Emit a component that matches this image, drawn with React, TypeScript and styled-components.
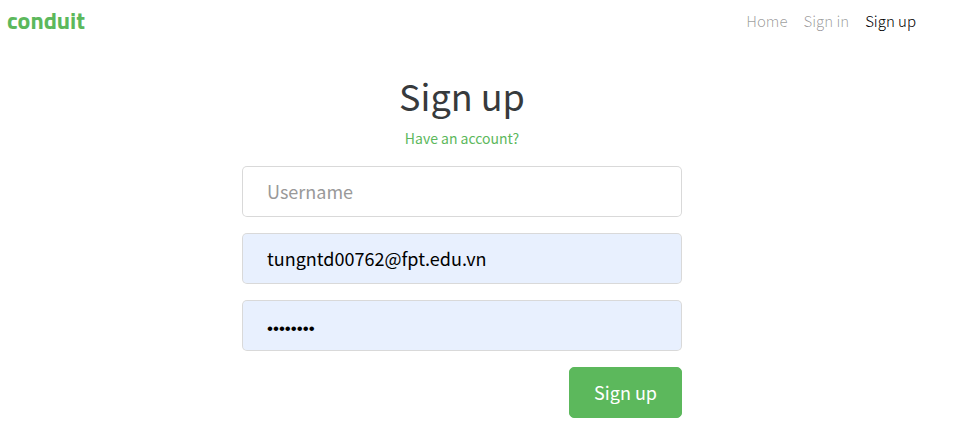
import React from 'react';
import styled, { createGlobalStyle } from 'styled-components';

const GlobalStyle = createGlobalStyle`
  *, *::before, *::after { box-sizing: border-box; }
  body {
    margin: 0;
    background: #fff;
    color: #373a3c;
    font-family: "Noto Sans CJK SC", sans-serif;
    font-size: 15px;
    line-height: 24px;
  }
`;

const Navbar = styled.nav`
  display: flex;
  align-items: center;
  justify-content: space-between;
  padding: 6px 47px 6px 7px;
`;

const Brand = styled.a`
  padding-bottom: 2px;
  color: #5cb85c;
  font-family: "Titillium Web", "Open Sans", sans-serif;
  font-size: 24px;
  font-weight: 700;
  line-height: 28px;
  text-decoration: none;
`;

const NavList = styled.ul`
  display: flex;
  gap: 16px;
  margin: 0;
  padding: 0;
  list-style: none;
`;

const NavLink = styled.a<{ $active?: boolean }>`
  color: ${({ $active }) => ($active ? '#000' : 'rgba(0, 0, 0, 0.4)')};
  font-weight: 300;
  text-decoration: none;
`;

const Shell = styled.div`
  padding: 31px 39px 0 0;
`;

const Page = styled.main`
  width: 50%;
  min-width: 280px;
  margin: 0 auto;
  padding: 0 11px;
`;

const Title = styled.h1`
  margin: 0 0 9px;
  font-size: 36px;
  font-weight: 400;
  line-height: 44px;
  text-align: center;
`;

const AccountPrompt = styled.p`
  margin: 0 0 16px;
  font-size: 14px;
  text-align: center;
`;

const AccountLink = styled.a`
  color: #5cb85c;
  text-decoration: none;
`;

const Form = styled.form`
  display: flex;
  flex-direction: column;
  gap: 16px;
`;

const Field = styled.input<{ $filled?: boolean }>`
  width: 100%;
  height: 51px;
  padding: 11px 24px 13px;
  border: 1px solid rgba(0, 0, 0, 0.15);
  border-radius: 5px;
  background: ${({ $filled }) => ($filled ? '#e8f0fe' : '#fff')};
  background-clip: padding-box;
  color: #000;
  font-family: inherit;
  font-size: 18px;
  line-height: 24px;

  &::placeholder { color: #999; opacity: 1; }
`;

const PasswordField = styled(Field)`
  padding: 15px 24px 9px;
  font-family: "Liberation Sans", sans-serif;
  font-size: 17px;
`;

const SubmitButton = styled.button`
  align-self: flex-end;
  height: 51px;
  padding: 11px 24px 13px;
  border: 1px solid #5cb85c;
  border-radius: 5px;
  background: #5cb85c;
  color: #fff;
  font-family: inherit;
  font-size: 18px;
  line-height: 24px;
`;

export default function App() {
  return (
    <>
      <GlobalStyle />
      <Navbar>
        <Brand href="#">conduit</Brand>
        <NavList>
          <li><NavLink href="#">Home</NavLink></li>
          <li><NavLink href="#">Sign in</NavLink></li>
          <li><NavLink href="#" $active aria-current="page">Sign up</NavLink></li>
        </NavList>
      </Navbar>
      <Shell>
        <Page>
          <Title>Sign up</Title>
          <AccountPrompt><AccountLink href="#">Have an account?</AccountLink></AccountPrompt>
          <Form onSubmit={(event) => event.preventDefault()}>
            <Field type="text" placeholder="Username" aria-label="Username" />
            <Field $filled type="email" defaultValue="tungntd00762@fpt.edu.vn" aria-label="Email" />
            <PasswordField $filled type="password" defaultValue="password" aria-label="Password" />
            <SubmitButton type="submit">Sign up</SubmitButton>
          </Form>
        </Page>
      </Shell>
    </>
  );
}
